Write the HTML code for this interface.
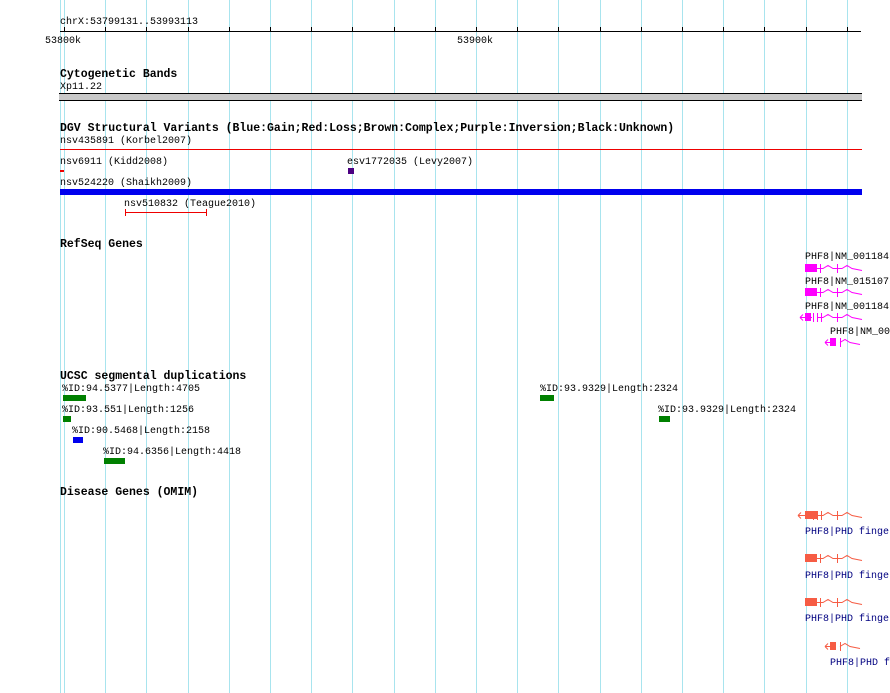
<!DOCTYPE html>
<html><head><style>
body{margin:0;width:890px;height:693px;background:#fff;position:relative;overflow:hidden;font-family:"Liberation Mono",monospace;font-size:10px;color:#000}
.t{position:absolute;white-space:pre;line-height:10px}
.b{font-weight:bold;font-size:11.5px}
.g{position:absolute;top:0;width:1px;height:693px;background:#a8e4ee}
.r{position:absolute}
.nv{color:#000080}
</style></head><body>
<script>
for(let i=0;i<20;i++){document.write('<div class="g" style="left:'+Math.round(64+41.2*i)+'px"></div>');document.write('<div class="r" style="left:'+Math.round(64+41.2*i)+'px;top:27px;width:1px;height:4px;background:#000"></div>');}
</script>
<div class="g" style="left:60px"></div>
<div class="t" style="left:60px;top:18px">chrX:53799131..53993113</div>
<div class="r" style="left:60px;top:31px;width:801px;height:1px;background:#000"></div>
<div class="t" style="left:45px;top:37px">53800k</div>
<div class="t" style="left:457px;top:37px">53900k</div>
<div class="t b" style="left:60px;top:70px">Cytogenetic Bands</div>
<div class="t" style="left:60px;top:83px">Xp11.22</div>
<div class="r" style="left:59px;top:93px;width:803px;border-top:1px solid #000;border-bottom:1px solid #000;box-sizing:border-box;height:8px;background:#c8c8c8"></div>
<div class="t b" style="left:60px;top:124px">DGV Structural Variants (Blue:Gain;Red:Loss;Brown:Complex;Purple:Inversion;Black:Unknown)</div>
<div class="t" style="left:60px;top:137px">nsv435891 (Korbel2007)</div>
<div class="r" style="left:60px;top:149px;width:802px;height:1px;background:#e00"></div>
<div class="t" style="left:60px;top:158px">nsv6911 (Kidd2008)</div>
<div class="r" style="left:60px;top:170px;width:4px;height:2px;background:#e00"></div>
<div class="t" style="left:347px;top:158px">esv1772035 (Levy2007)</div>
<div class="r" style="left:348px;top:168px;width:6px;height:6px;background:#4b0082"></div>
<div class="t" style="left:60px;top:179px">nsv524220 (Shaikh2009)</div>
<div class="r" style="left:60px;top:189px;width:802px;height:6px;background:#0000ee"></div>
<div class="t" style="left:124px;top:200px">nsv510832 (Teague2010)</div>
<div class="r" style="left:125px;top:212px;width:82px;height:1px;background:#e00"></div>
<div class="r" style="left:125px;top:209px;width:1px;height:7px;background:#e00"></div>
<div class="r" style="left:206px;top:209px;width:1px;height:7px;background:#e00"></div>
<div class="t b" style="left:60px;top:240px">RefSeq Genes</div>
<div class="t" style="left:805px;top:253px">PHF8|NM_001184</div>
<div class="r" style="left:805px;top:264px;width:12px;height:8px;background:#f0f"></div>
<div class="t" style="left:805px;top:278px">PHF8|NM_015107</div>
<div class="r" style="left:805px;top:288px;width:12px;height:8px;background:#f0f"></div>
<div class="t" style="left:805px;top:303px">PHF8|NM_001184</div>
<div class="r" style="left:805px;top:313px;width:6px;height:8px;background:#f0f"></div>
<div class="t" style="left:830px;top:328px">PHF8|NM_00</div>
<div class="r" style="left:830px;top:338px;width:6px;height:8px;background:#f0f"></div>
<svg class="r" style="left:795px;top:260px" width="95" height="95" fill="none" stroke="#f0f">
<path d="M22 8.5h6l5-3 5 3h9l5-3 5 3l10 2M25.5 4v9M42.5 4v9"/>
<path d="M22 32.5h6l5-3 5 3h9l5-3 5 3l10 2M25.5 28v9M42.5 28v9"/>
<path d="M5 57.5h12M5 57.5l3-3M5 57.5l3 3M18.5 53v9M22.5 53v9M26.5 53v9M22 57.5h6l5-3 5 3h9l5-3 5 3l10 2M42.5 53v9"/>
<path d="M30 82.5h10M30 82.5l3-3M30 82.5l3 3M45.5 78v9M45 82.5l5-3 5 3l10 2"/>
</svg>
<div class="t b" style="left:60px;top:372px">UCSC segmental duplications</div>
<div class="t" style="left:62px;top:385px">%ID:94.5377|Length:4705</div>
<div class="r" style="left:63px;top:395px;width:23px;height:6px;background:#008000"></div>
<div class="t" style="left:62px;top:406px">%ID:93.551|Length:1256</div>
<div class="r" style="left:63px;top:416px;width:8px;height:6px;background:#008000"></div>
<div class="t" style="left:72px;top:427px">%ID:90.5468|Length:2158</div>
<div class="r" style="left:73px;top:437px;width:10px;height:6px;background:#0000ee"></div>
<div class="t" style="left:103px;top:448px">%ID:94.6356|Length:4418</div>
<div class="r" style="left:104px;top:458px;width:21px;height:6px;background:#008000"></div>
<div class="t" style="left:540px;top:385px">%ID:93.9329|Length:2324</div>
<div class="r" style="left:540px;top:395px;width:14px;height:6px;background:#008000"></div>
<div class="t" style="left:658px;top:406px">%ID:93.9329|Length:2324</div>
<div class="r" style="left:659px;top:416px;width:11px;height:6px;background:#008000"></div>
<div class="t b" style="left:60px;top:488px">Disease Genes (OMIM)</div>
<div class="r" style="left:805px;top:511px;width:12px;height:8px;background:#f65c44"></div>
<div class="r" style="left:805px;top:554px;width:12px;height:8px;background:#f65c44"></div>
<div class="r" style="left:805px;top:598px;width:12px;height:8px;background:#f65c44"></div>
<div class="r" style="left:830px;top:642px;width:6px;height:8px;background:#f65c44"></div>
<svg class="r" style="left:795px;top:505px" width="95" height="150" fill="none" stroke="#f65c44">
<path d="M3 10.5h12M3 10.5l3-3M3 10.5l3 3M18.5 6v9M22.5 6v9M26.5 6v9M22 10.5h6l5-3 5 3h9l5-3 5 3l10 2M42.5 6v9"/>
<path d="M22 53.5h6l5-3 5 3h9l5-3 5 3l10 2M25.5 49v9M42.5 49v9"/>
<path d="M22 97.5h6l5-3 5 3h9l5-3 5 3l10 2M25.5 93v9M42.5 93v9"/>
<path d="M30 141.5h10M30 141.5l3-3M30 141.5l3 3M45.5 137v9M45 141.5l5-3 5 3l10 2"/>
</svg>
<div class="t nv" style="left:805px;top:528px">PHF8|PHD finger</div>
<div class="t nv" style="left:805px;top:572px">PHF8|PHD finger</div>
<div class="t nv" style="left:805px;top:615px">PHF8|PHD finger</div>
<div class="t nv" style="left:830px;top:659px">PHF8|PHD f</div>
</body></html>
